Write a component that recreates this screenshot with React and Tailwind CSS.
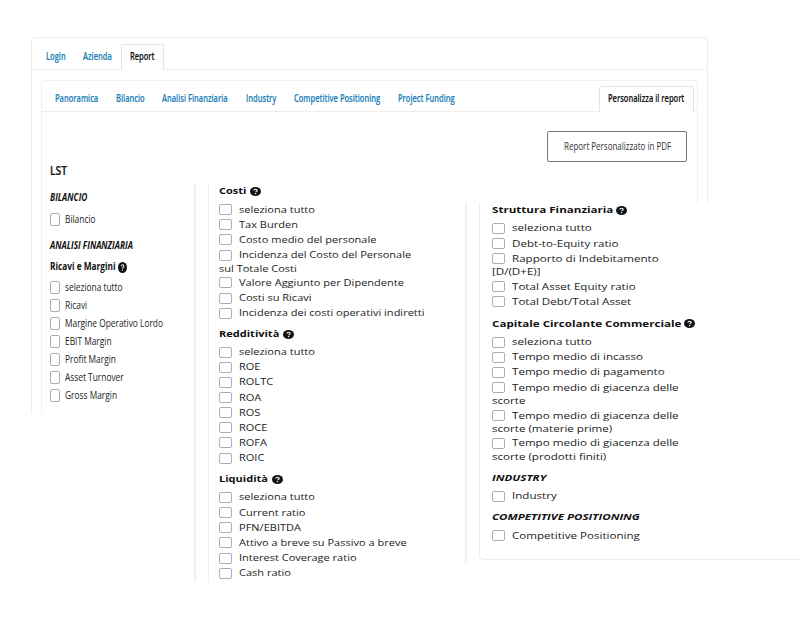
const narrow = "inline-block origin-left scale-x-[0.76] whitespace-nowrap";
const narrowBold = "inline-block origin-left scale-x-[0.79] whitespace-nowrap";
const tabText = "inline-block origin-left scale-x-[0.722] whitespace-nowrap [-webkit-text-stroke:0.15px_currentColor]";
const wide = "inline-block origin-left scale-x-[1.16] whitespace-nowrap";
const wider = "inline-block origin-left scale-x-[1.22] whitespace-nowrap";

function Help({ stretched }) {
  return (
    <svg
      viewBox="0 0 16 16"
      preserveAspectRatio="none"
      className={stretched ? "h-[9px] w-[11px] shrink-0" : "h-[11px] w-[9px] shrink-0"}
    >
      <ellipse cx="8" cy="8" rx="8" ry="8" fill="#111" />
      <path d="M5.6 6.3C5.7 4.8 6.7 4 8.1 4c1.4 0 2.4.8 2.4 2 0 1.8-2.3 1.7-2.3 3.5" fill="none" stroke="#fff" strokeWidth="1.7" />
      <circle cx="8.1" cy="11.8" r="1.1" fill="#fff" />
    </svg>
  );
}

function Tab({ className, children }) {
  return (
    <div className={`flex shrink-0 items-center text-[10.4px] font-semibold text-[#1b7fb8] ${className}`}>
      <span className={tabText}>{children}</span>
    </div>
  );
}

function Heading({ children, help, italic, className, textWidth = "", text = wider }) {
  return (
    <div className={`flex items-center text-[9.5px] font-bold text-[#111] ${className}`}>
      <div className={`shrink-0 ${textWidth}`}>
        <span className={`${text} ${italic ? "italic" : ""}`}>{children}</span>
      </div>
      {help && <Help stretched />}
    </div>
  );
}

function Item({ label, rest, text = wide }) {
  return (
    <div className="text-[9.5px] text-[#222]">
      <div className="flex h-[15.12px] items-center">
        <span className="mr-[7px] h-[11px] w-[13px] shrink-0 rounded-[2px] border border-[#aaaeb2]" />
        <span className={text}>{label}</span>
      </div>
      {rest && (
        <div className="flex h-[12.8px] items-start leading-[11px]">
          <span className={text}>{rest}</span>
        </div>
      )}
    </div>
  );
}

function NarrowItem({ children, className = "h-[17.95px]" }) {
  return (
    <div className={`flex items-center text-[11px] text-[#222] ${className}`}>
      <span className="mr-[5px] h-[13px] w-[10px] shrink-0 rounded-[2px] border border-[#aaaeb2]" />
      <span className={narrow}>{children}</span>
    </div>
  );
}

const costi = [
  ["seleziona tutto"],
  ["Tax Burden"],
  ["Costo medio del personale"],
  ["Incidenza del Costo del Personale", "sul Totale Costi"],
  ["Valore Aggiunto per Dipendente"],
  ["Costi su Ricavi"],
  ["Incidenza dei costi operativi indiretti"],
];
const redditivita = ["seleziona tutto", "ROE", "ROLTC", "ROA", "ROS", "ROCE", "ROFA", "ROIC"];
const liquidita = ["seleziona tutto", "Current ratio", "PFN/EBITDA", "Attivo a breve su Passivo a breve", "Interest Coverage ratio", "Cash ratio"];
const struttura = [
  ["seleziona tutto"],
  ["Debt-to-Equity ratio"],
  ["Rapporto di Indebitamento", "[D/(D+E)]"],
  ["Total Asset Equity ratio"],
  ["Total Debt/Total Asset"],
];
const capitale = [
  ["seleziona tutto"],
  ["Tempo medio di incasso"],
  ["Tempo medio di pagamento"],
  ["Tempo medio di giacenza delle", "scorte"],
  ["Tempo medio di giacenza delle", "scorte (materie prime)"],
  ["Tempo medio di giacenza delle", "scorte (prodotti finiti)"],
];
const ricavi = ["seleziona tutto", "Ricavi", "Margine Operativo Lordo", "EBIT Margin", "Profit Margin", "Asset Turnover", "Gross Margin"];

export default function App() {
  return (
    <div className="h-[619px] w-[801px] overflow-hidden bg-white pt-[37px] font-['Open_Sans',sans-serif]">
      <header className="ml-[31px] h-[124px] w-[677px] rounded-t-[5px] border border-b-0 border-[#eee]">
        <nav className="flex h-[32px] border-b border-[#eee] pl-[14px]">
          <Tab className="mt-[6px] w-[37px]">Login</Tab>
          <Tab className="mt-[6px] w-[38px]">Azienda</Tab>
          <div className="mt-[6px] -mb-px flex w-[43px] items-center rounded-t-[2px] border border-b-0 border-[#e4e4e4] bg-white pb-px pl-[8px] text-[10.4px] font-semibold text-[#111]">
            <span className={tabText}>Report</span>
          </div>
        </nav>
        <div className="ml-[9px] mr-[9px] mt-[10px] h-[81px] rounded-t-[4px] border border-b-0 border-[#f0f0f0]">
          <nav className="flex h-[31px] border-b border-[#eee] pl-[13px]">
            <Tab className="mt-[5px] w-[61px]">Panoramica</Tab>
            <Tab className="mt-[5px] w-[46px]">Bilancio</Tab>
            <Tab className="mt-[5px] w-[84px]">Analisi Finanziaria</Tab>
            <Tab className="mt-[5px] w-[48px]">Industry</Tab>
            <Tab className="mt-[5px] w-[104px]">Competitive Positioning</Tab>
            <Tab className="mt-[5px] w-[60px]">Project Funding</Tab>
            <div className="ml-auto mr-[3px] mt-[5px] -mb-px flex w-[95px] items-center rounded-t-[2px] border border-b-0 border-[#e4e4e4] bg-white pb-[2px] pl-[8px] text-[10.4px] font-semibold text-[#111]">
              <span className={tabText}>Personalizza il report</span>
            </div>
          </nav>
          <div className="ml-auto mr-[10px] mt-[19px] flex h-[31px] w-[140px] items-center rounded-[2px] border border-[#777] pb-px pl-[16px] text-[10.8px] text-[#333]">
            <span className="inline-block origin-left scale-x-[0.74] whitespace-nowrap">Report Personalizzato in PDF</span>
          </div>
        </div>
      </header>

      <main className="ml-[31px] flex h-[425px] items-start">
        <section className="h-[253px] w-[163px] border-l border-[#eee] pl-[9px]">
          <div className="h-full border-l border-[#f0f0f0] pl-[8px]">
            <div className="flex h-[20px] items-center text-[13px] font-semibold text-[#111]">
              <span className={`${narrowBold} [-webkit-text-stroke:0.2px_currentColor]`}>LST</span>
            </div>
            <div className="mt-[7px] flex h-[20px] items-center text-[10.5px] font-bold italic text-[#111]">
              <span className={narrowBold}>BILANCIO</span>
            </div>
            <NarrowItem className="mt-[2px] h-[18px]">Bilancio</NarrowItem>
            <div className="mt-[8px] flex h-[20px] items-center text-[10.5px] font-bold italic text-[#111]">
              <span className={narrowBold}>ANALISI FINANZIARIA</span>
            </div>
            <div className="mt-px flex h-[20px] items-center text-[10.5px] font-bold text-[#111]">
              <div className="w-[68px]">
                <span className={narrowBold}>Ricavi e Margini</span>
              </div>
              <Help />
            </div>
            <div className="mt-[1.5px]">
              {ricavi.map((label) => (
                <NarrowItem key={label}>{label}</NarrowItem>
              ))}
            </div>
          </div>
        </section>

        <section className="mt-[22px] h-[399px] w-[271px] border-l-2 border-[#eee] pl-[12px]">
          <div className="h-full border-l border-[#f0f0f0] pl-[10px] pt-px">
            <Heading help text={wide} textWidth="w-[31px]" className="h-[15px]">Costi</Heading>
            <div className="mt-[3.2px]">
              {costi.map(([label, rest]) => (
                <Item key={label} label={label} rest={rest} />
              ))}
            </div>
            <Heading help text={wide} textWidth="w-[64px]" className="mt-[6px] h-[15px]">Redditività</Heading>
            <div className="mt-[3px]">
              {redditivita.map((label) => (
                <Item key={label} label={label} />
              ))}
            </div>
            <Heading help text={wide} textWidth="w-[53px]" className="mt-[6px] h-[15px]">Liquidità</Heading>
            <div className="mt-[3.4px]">
              {liquidita.map((label) => (
                <Item key={label} label={label} />
              ))}
            </div>
          </div>
        </section>

        <section className="w-[336px]">
          <div className="ml-auto mr-[93px] h-[42px] w-[11px] border-x border-[#eee]" />
          <div className="h-[359px] border-l-2 border-[#eee] pl-[12px]">
            <div className="h-[357px] rounded-bl-[5px] border-b border-l border-[#eee] pl-[11.5px]">
              <Heading help textWidth="w-[124px]" className="h-[14px]">Struttura Finanziaria</Heading>
              <div className="mt-[4px]">
                {struttura.map(([label, rest]) => (
                  <Item key={label} label={label} rest={rest} text={wider} />
                ))}
              </div>
              <Heading help textWidth="w-[192px]" className="mt-[7px] h-[15px]">Capitale Circolante Commerciale</Heading>
              <div className="mt-[3.5px]">
                {capitale.map(([label, rest], i) => (
                  <Item key={i} label={label} rest={rest} text={wider} />
                ))}
              </div>
              <Heading italic className="mt-[6.4px] h-[15px]">INDUSTRY</Heading>
              <div className="mt-[3.6px]">
                <Item label="Industry" text={wider} />
              </div>
              <Heading italic className="mt-[6px] h-[15px]">COMPETITIVE POSITIONING</Heading>
              <div className="mt-[3.4px]">
                <Item label="Competitive Positioning" text={wider} />
              </div>
            </div>
          </div>
        </section>
      </main>
    </div>
  );
}
